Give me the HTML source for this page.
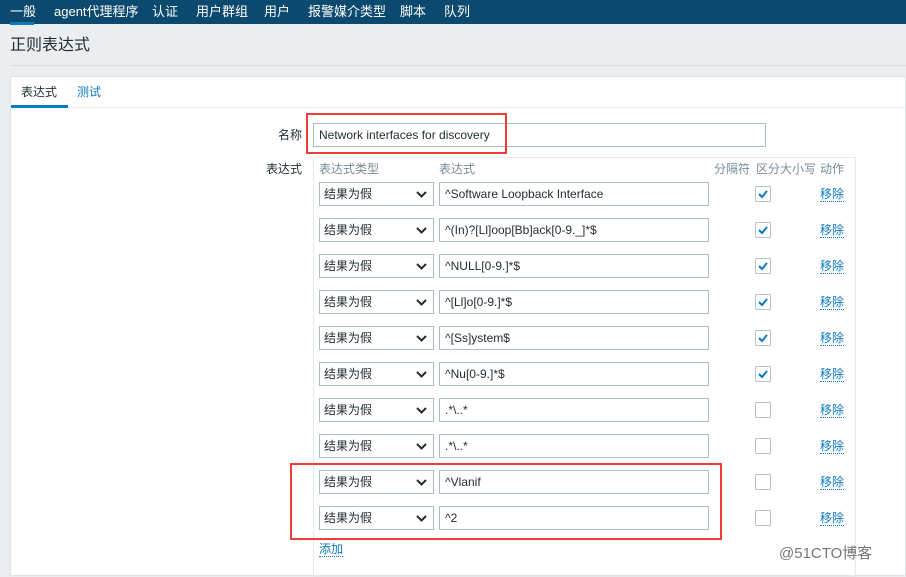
<!DOCTYPE html><html><head><meta charset="utf-8"><style>
*{box-sizing:border-box;margin:0;padding:0}
body{width:906px;height:569px;overflow:hidden;background:#ebeef0;font-family:"Liberation Sans","Noto Sans CJK SC",sans-serif;font-size:12px;color:#1f2c33;position:relative;line-height:14px}
.nav{position:absolute;left:0;top:0;width:906px;height:24px;background:#0b4a6e}
.nav span{position:absolute;top:4px;color:#fff;font-size:13px;line-height:15px}
.ul{position:absolute;left:10px;top:22px;width:24px;height:3px;background:#0a7ac0}
.title{position:absolute;left:10px;top:37px;font-size:16px;line-height:18px;color:#1f2c33}
.sep{position:absolute;left:10px;top:65px;width:896px;height:1px;background:#d9dde0}
.panel{position:absolute;left:10px;top:76px;width:896px;height:500px;background:#fff;border:1px solid #dfe4e7}
.tabs{position:absolute;left:0;top:0;width:100%;height:31px;border-bottom:1px solid #e6e9eb}
.abs{position:absolute}
.inp{position:absolute;border:1px solid #acbbc4;background:#fff;height:24px;padding:4px 5px;font-size:12px;color:#1f2c33;line-height:14px}
.sel{position:absolute;border:1px solid #acbbc4;background:#fff;height:24px;width:115px;padding:4px 4px;font-size:12px;line-height:14px}
.chk{position:absolute;width:16px;height:16px;border:1px solid #b5c2c9;border-radius:2px;background:#fff}
.rm{position:absolute;color:#0a7ac0;border-bottom:1px dotted #0a7ac0;line-height:14px}
.red{position:absolute;border:2px solid #f23c3c}
</style></head><body>
<div class="nav">
<span style="left:10px">一般</span><span style="left:54px">agent代理程序</span><span style="left:152px">认证</span><span style="left:196px">用户群组</span><span style="left:264px">用户</span><span style="left:308px">报警媒介类型</span><span style="left:400px">脚本</span><span style="left:444px">队列</span>
<div class="ul"></div></div>
<div class="title">正则表达式</div>
<div class="sep"></div>
<div class="panel"><div class="tabs">
<span class="abs" style="left:10px;top:8px">表达式</span><span class="abs" style="left:66px;top:8px;color:#0a7ac0">测试</span>
<div class="abs" style="left:0;top:28px;width:57px;height:3px;background:#0a7ac0"></div></div></div>
<span class="abs" style="left:278px;top:128px">名称</span>
<div class="inp" style="left:313px;top:123px;width:453px">Network interfaces for discovery</div>
<span class="abs" style="left:266px;top:162px">表达式</span>
<div class="abs" style="left:313px;top:157px;width:543px;height:420px;border:1px solid #e6e9eb"></div>
<span class="abs" style="left:319px;top:162px;color:#768d99">表达式类型</span>
<span class="abs" style="left:439px;top:162px;color:#768d99">表达式</span>
<span class="abs" style="left:714px;top:162px;color:#768d99">分隔符</span>
<span class="abs" style="left:756px;top:162px;color:#768d99">区分大小写</span>
<span class="abs" style="left:820px;top:162px;color:#768d99">动作</span>
<div id="rows"></div>
<span class="rm" style="left:319px;top:542px">添加</span>
<div class="red" style="left:306px;top:113px;width:201px;height:41px"></div>
<div class="red" style="left:290px;top:463px;width:432px;height:77px"></div>
<span class="abs" style="left:779px;top:545px;font-size:15px;line-height:17px;color:#777">@51CTO博客</span>
<script>
var ex=["^Software Loopback Interface","^(In)?[Ll]oop[Bb]ack[0-9._]*$","^NULL[0-9.]*$","^[Ll]o[0-9.]*$","^[Ss]ystem$","^Nu[0-9.]*$",".*\\..*",".*\\..*","^Vlanif","^2"];
var h="";
ex.forEach(function(e,i){var y=182+i*36;
h+='<div class="sel" style="left:319px;top:'+y+'px">结果为假<svg style="position:absolute;right:6px;top:8px" width="11" height="7"><path d="M1 1L5.5 5.5L10 1" stroke="#1f2c33" stroke-width="2" fill="none"/></svg></div>';
h+='<div class="inp" style="left:439px;top:'+y+'px;width:270px">'+e.replace(/</g,"&lt;")+'</div>';
h+='<div class="chk" style="left:755px;top:'+(y+4)+'px">'+(i<6?'<svg width="14" height="14" style="position:absolute;left:0;top:0"><path d="M3 7L6 10L11 4" stroke="#0a7ac0" stroke-width="2" fill="none"/></svg>':'')+'</div>';
h+='<span class="rm" style="left:820px;top:'+(y+5)+'px">移除</span>';});
document.getElementById("rows").innerHTML=h;
</script>
</body></html>
